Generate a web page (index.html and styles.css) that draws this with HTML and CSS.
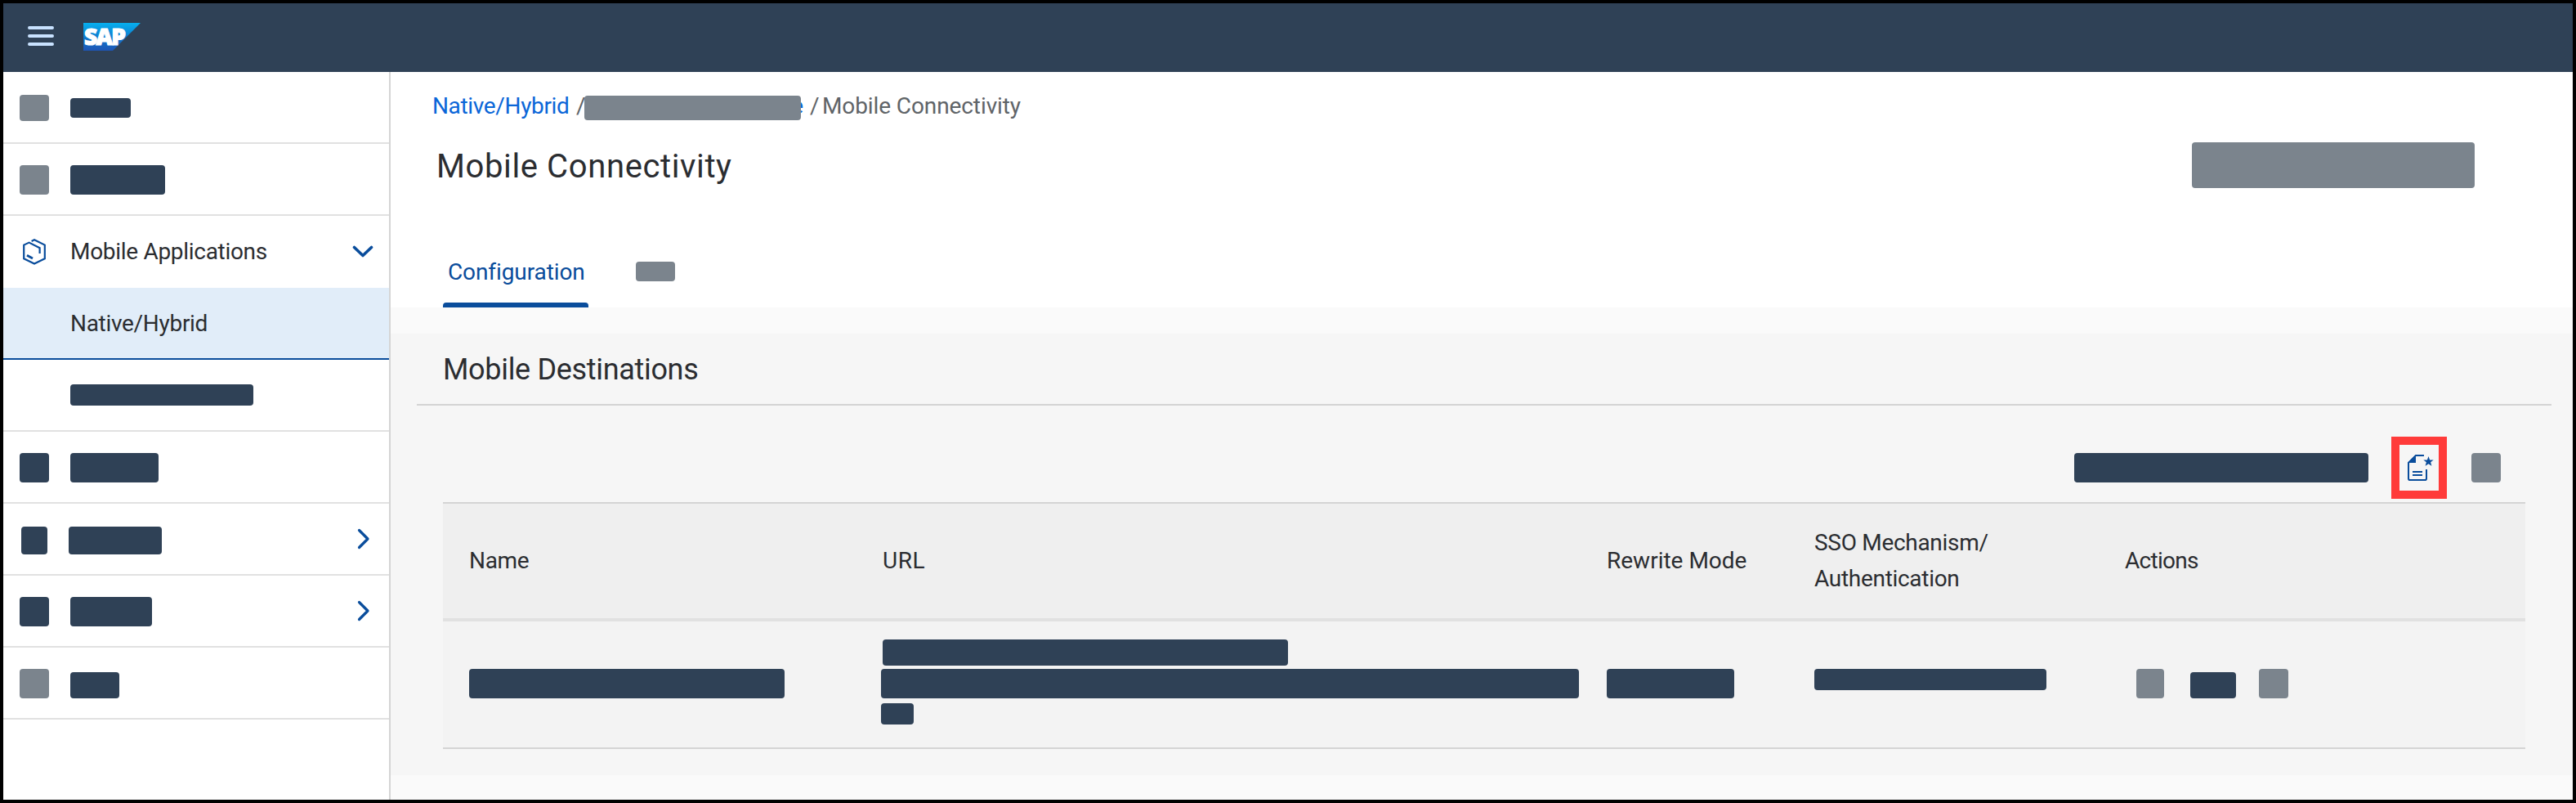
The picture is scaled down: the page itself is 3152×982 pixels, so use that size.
FILE: index.html
```html
<!DOCTYPE html>
<html lang="en">
<head>
<meta charset="utf-8">
<title>Mobile Connectivity</title>
<link rel="stylesheet" href="styles.css">
</head>
<body>
<div class="app">
  <header class="shell">
    <svg class="menu" width="32" height="24" viewBox="0 0 32 24"><path d="M2 2h28M2 12h28M2 22h28" stroke="#c9e2ff" stroke-width="4" stroke-linecap="round"/></svg>
    <svg class="logo" width="70" height="34" viewBox="0 0 70 34">
      <defs><linearGradient id="g" x1="0" y1="0" x2="0" y2="1"><stop offset="0" stop-color="#06b0ef"/><stop offset=".6" stop-color="#1273c9"/><stop offset="1" stop-color="#1e55b5"/></linearGradient></defs>
      <path d="M0 0H70L36 34H0Z" fill="url(#g)"/>
      <text class="logo-text" x="1" y="27" textLength="51" lengthAdjust="spacing">SAP</text>
    </svg>
  </header>
  <div class="body">
    <nav class="side">
      <div class="row"><span class="blk gray ico ico-short"></span><span class="blk bar b1"></span></div>
      <div class="row"><span class="blk gray ico"></span><span class="blk bar b2"></span></div>
      <div class="row open">
        <svg class="hex" width="28" height="32" viewBox="0 0 28 32" fill="none" stroke="#0a4d9c" stroke-width="2.2"><path d="M10.600 2.900 14 1.200 26.800 7.600V24.200L14 30.600 1.200 24.200V7.600L7.600 4.600 20.600 11.200V18"/><path d="M5 20.200 12 24" stroke-width="2.800"/></svg>
        <span class="label">Mobile Applications</span>
        <svg class="down" width="26" height="16" viewBox="0 0 26 16"><path d="M2.500 2.500 13 12.500 23.500 2.500" fill="none" stroke="#0a4d9c" stroke-width="3.600" stroke-linecap="round" stroke-linejoin="round"/></svg>
      </div>
      <div class="row selected"><span class="label">Native/Hybrid</span></div>
      <div class="row sub"><span class="blk bar b3"></span></div>
      <div class="row"><span class="blk ico"></span><span class="blk bar b4"></span></div>
      <div class="row"><span class="blk ico ico-small"></span><span class="blk bar b5"></span>
        <svg class="next" width="16" height="26" viewBox="0 0 16 26"><path d="M2.500 2.500 13 13 2.500 23.500" fill="none" stroke="#0a4d9c" stroke-width="3.200" stroke-linecap="round" stroke-linejoin="round"/></svg></div>
      <div class="row"><span class="blk ico"></span><span class="blk bar b6"></span>
        <svg class="next" width="16" height="26" viewBox="0 0 16 26"><path d="M2.500 2.500 13 13 2.500 23.500" fill="none" stroke="#0a4d9c" stroke-width="3.200" stroke-linecap="round" stroke-linejoin="round"/></svg></div>
      <div class="row"><span class="blk gray ico"></span><span class="blk bar b7"></span></div>
    </nav>
    <main class="main">
      <section class="head">
        <div class="crumbs"><a class="link root">Native/Hybrid</a><span class="sep">/</span><a class="link hidden-name">e<span class="blk gray mask"></span></a><span class="sep sep2">/</span><span class="here">Mobile Connectivity</span></div>
        <div class="title-row"><h1 class="title">Mobile Connectivity</h1><span class="blk gray head-action"></span></div>
        <div class="tabs"><div class="tab">Configuration</div><span class="blk gray tab2"></span></div>
      </section>
      <section class="panel">
        <div class="panel-head"><h2 class="panel-title">Mobile Destinations</h2></div>
        <div class="tools">
          <span class="blk search"></span>
          <span class="highlight"><svg width="48" height="56" viewBox="0 0 48 56">
            <path d="M30 13H20L11 22V41.200Q11 43 12.800 43H31.200Q33 43 33 41.200V30" fill="none" stroke="#0a4d9c" stroke-width="2"/>
            <path d="M20 12V22H10Z" fill="#0a4d9c"/>
            <path d="M16 33H28M16 37H28" stroke="#0a4d9c" stroke-width="2"/>
            <path d="M35.500 14 37.100 18.400 41.700 18.500 38.100 21.300 39.400 25.800 35.500 23.200 31.600 25.800 32.900 21.300 29.300 18.500 33.900 18.400Z" fill="#0a4d9c"/>
          </svg></span>
          <span class="blk gray tool2"></span>
        </div>
        <div class="table">
          <div class="cols thead">
            <span class="th name">Name</span><span class="th url">URL</span><span class="th">Rewrite Mode</span><span class="th sso">SSO Mechanism/<br>Authentication</span><span class="th act">Actions</span>
          </div>
          <div class="cols trow">
            <span class="blk c-name"></span>
            <div class="c-url"><span class="blk u1"></span><span class="blk u2"></span><span class="blk u3"></span></div>
            <span class="blk c-mode"></span>
            <span class="blk c-sso"></span>
            <div class="c-act"><span class="blk gray a1"></span><span class="blk a2"></span><span class="blk gray a3"></span></div>
          </div>
        </div>
      </section>
    </main>
  </div>
</div>
</body>
</html>
```

FILE: styles.css
```css
* { box-sizing: border-box; }
body { margin: 0; background: #000; font-family: Roboto, "Liberation Sans", sans-serif; font-size: 28px; line-height: 44px; color: #2b2d31; }
.app { width: 3152px; height: 982px; border: 4px solid #000; display: flex; flex-direction: column; background: #fafafa; overflow: hidden; }
.shell { height: 84px; flex: none; background: #2f4156; display: flex; align-items: flex-start; padding: 24px 0 0 30px; }
.menu { margin-top: 4px; }
.logo { margin-left: 36px; overflow: visible; }
.logo-text { font: 800 28px "Open Sans", sans-serif; fill: #fff; stroke: #fff; stroke-width: 1.2; }
.body { flex: 1; display: flex; min-height: 0; }
.blk { display: block; flex: none; background: #2f4156; border-radius: 4px; }
.gray { background: #7b848d; }

.side { width: 474px; flex: none; background: #fff; border-right: 2px solid #d5d5d5; }
.row { height: 88px; border-bottom: 2px solid #e1e1e1; display: flex; align-items: flex-start; padding-left: 20px; }
.ico { width: 36px; height: 36px; margin-top: 26px; }
.ico-short { height: 32px; margin-top: 28px; }
.ico-small { width: 32px; height: 34px; margin: 28px 2px 0; }
.bar { height: 36px; margin: 26px 0 0 26px; }
.b1 { width: 74px; height: 24px; margin-top: 32px; }
.b2 { width: 116px; }
.b3 { width: 224px; height: 26px; margin: 30px 0 0; }
.b4 { width: 108px; }
.b5 { width: 114px; height: 34px; margin: 28px 0 0 24px; }
.b6 { width: 100px; }
.b7 { width: 60px; height: 32px; margin-top: 30px; }
.open { border-bottom: 0; padding-left: 24px; }
.hex { margin: 28px 30px 0 0; }
.label { margin-top: 22px; letter-spacing: -.3px; }
.down { margin: 36px 19px 0 auto; }
.next { margin: 30px 23px 0 auto; }
.selected { background: #e1edf9; border-bottom-color: #0a4d9c; padding-left: 82px; }
.sub { padding-left: 82px; }

.main { flex: 1; min-width: 0; display: flex; flex-direction: column; }
.head { height: 288px; flex: none; background: #fff; }
.crumbs { height: 86px; padding: 20px 0 0 51px; display: flex; letter-spacing: -.1px; }
.link { color: #0a66d8; }
.root { width: 168px; letter-spacing: -.35px; white-space: nowrap; }
.sep, .here { color: #5f6468; }
.sep { width: 11px; margin-left: 8px; }
.hidden-name { position: relative; width: 270px; margin-left: -3px; text-align: right; letter-spacing: 0; }
.mask { position: absolute; left: 2px; top: 9px; width: 265px; height: 30px; }
.sep2 { margin: 0 4px 0 8px; }
.title-row { height: 140px; display: flex; justify-content: space-between; padding: 0 120px 0 56px; }
.title { margin: 6px 0 0; font-size: 40px; line-height: 48px; font-weight: 400; letter-spacing: .62px; }
.head-action { width: 346px; height: 56px; }
.tabs { display: flex; padding-left: 64px; }
.tab { width: 178px; height: 62px; padding: 1px 0 0 6px; line-height: 36px; color: #0a4d9c; position: relative; letter-spacing: -.1px; }
.tab::after { content: ""; position: absolute; left: 0; right: 0; bottom: 0; height: 6px; border-radius: 4px 4px 0 0; background: #0a4d9c; }
.tab2 { width: 48px; height: 24px; margin: 6px 0 0 58px; }

.panel { margin-top: 32px; height: 540px; background: #f6f6f6; padding-left: 32px; }
.panel-head { width: 2612px; height: 88px; border-bottom: 2px solid #d4d4d4; padding: 22px 0 0 32px; }
.panel-title { margin: 0; font-size: 36px; line-height: 44px; font-weight: 400; letter-spacing: -.32px; }
.tools { width: 2612px; height: 118px; display: flex; justify-content: flex-end; padding: 38px 62px 0 0; }
.search { width: 360px; height: 36px; margin-top: 20px; }
.highlight { width: 68px; height: 76px; margin: 0 30px 0 28px; border: 10px solid #ff3b3a; }
.highlight svg { display: block; }
.tool2 { width: 36px; height: 36px; margin-top: 20px; }
.table { width: 2548px; margin-left: 32px; border-top: 2px solid #d4d4d4; }
.cols { display: grid; grid-template-columns: 506px 886px 254px 380px 1fr; padding-left: 32px; }
.thead { height: 144px; background: #efefef; border-bottom: 4px solid #e1e1e1; align-items: center; }
.name { letter-spacing: -.3px; }
.url { letter-spacing: .6px; }
.sso { letter-spacing: -.3px; }
.act { letter-spacing: -.7px; }
.trow { height: 156px; background: #f3f3f3; border-bottom: 2px solid #d4d4d4; align-items: start; }
.c-name { width: 386px; height: 36px; margin-top: 58px; }
.c-url { margin: 22px 0 0 -2px; }
.u1 { width: 496px; height: 32px; margin-left: 2px; }
.u2 { width: 854px; height: 36px; margin-top: 4px; }
.u3 { width: 40px; height: 26px; margin-top: 6px; }
.c-mode { width: 156px; height: 36px; margin-top: 58px; }
.c-sso { width: 284px; height: 26px; margin-top: 58px; }
.c-act { display: flex; padding: 58px 0 0 14px; }
.a1 { width: 34px; height: 36px; }
.a2 { width: 56px; height: 32px; margin: 4px 28px 0 32px; }
.a3 { width: 36px; height: 36px; }
```
